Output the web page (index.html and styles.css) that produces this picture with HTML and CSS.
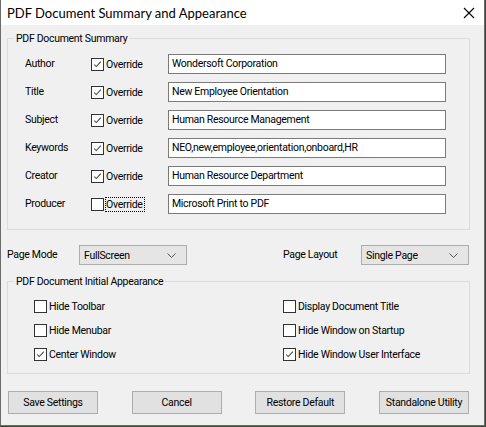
FILE: index.html
```html
<!DOCTYPE html>
<html>
<head>
<meta charset="utf-8">
<link rel="stylesheet" href="styles.css">
</head>
<body>
<div class="window">
  <div class="titlebar">
    <span class="title">PDF Document Summary and Appearance</span>
    <svg class="close" width="12" height="12" viewBox="0 0 12 12"><path d="M1 1L11 11M11 1L1 11" stroke="#000" stroke-width="1.1" fill="none"/></svg>
  </div>
  <div class="content">
    <fieldset class="group summary">
      <legend>PDF Document Summary</legend>
      <div class="rows">
        <div class="row"><span class="lbl">Author</span><span class="cb checked"><svg viewBox="0 0 13 13"><path d="M2.5 6.5L5 9L10.5 3" /></svg></span><span class="cbtext">Override</span><div class="input">Wondersoft Corporation</div></div>
        <div class="row"><span class="lbl">Title</span><span class="cb checked"><svg viewBox="0 0 13 13"><path d="M2.5 6.5L5 9L10.5 3" /></svg></span><span class="cbtext">Override</span><div class="input">New Employee Orientation</div></div>
        <div class="row"><span class="lbl">Subject</span><span class="cb checked"><svg viewBox="0 0 13 13"><path d="M2.5 6.5L5 9L10.5 3" /></svg></span><span class="cbtext">Override</span><div class="input">Human Resource Management</div></div>
        <div class="row"><span class="lbl">Keywords</span><span class="cb checked"><svg viewBox="0 0 13 13"><path d="M2.5 6.5L5 9L10.5 3" /></svg></span><span class="cbtext">Override</span><div class="input">NEO,new,employee,orientation,onboard,HR</div></div>
        <div class="row"><span class="lbl">Creator</span><span class="cb checked"><svg viewBox="0 0 13 13"><path d="M2.5 6.5L5 9L10.5 3" /></svg></span><span class="cbtext">Override</span><div class="input">Human Resource Department</div></div>
        <div class="row"><span class="lbl">Producer</span><span class="cb"></span><span class="cbtext"><span class="focus">Override</span></span><div class="input">Microsoft Print to PDF</div></div>
      </div>
    </fieldset>
    <div class="moderow">
      <span class="modelbl">Page Mode</span>
      <div class="select">FullScreen<svg class="chev" width="9" height="5" viewBox="0 0 9 5"><path d="M0.5 0.5L4.5 4.5L8.5 0.5"/></svg></div>
      <span class="modelbl layoutlbl">Page Layout</span>
      <div class="select">Single Page<svg class="chev" width="9" height="5" viewBox="0 0 9 5"><path d="M0.5 0.5L4.5 4.5L8.5 0.5"/></svg></div>
    </div>
    <fieldset class="group appearance">
      <legend>PDF Document Initial Appearance</legend>
      <div class="opts">
        <div class="col">
          <div class="opt"><span class="cb"></span><span class="cbtext">Hide Toolbar</span></div>
          <div class="opt"><span class="cb"></span><span class="cbtext">Hide Menubar</span></div>
          <div class="opt"><span class="cb checked"><svg viewBox="0 0 13 13"><path d="M2.5 6.5L5 9L10.5 3" /></svg></span><span class="cbtext">Center Window</span></div>
        </div>
        <div class="col right">
          <div class="opt"><span class="cb"></span><span class="cbtext">Display Document Title</span></div>
          <div class="opt"><span class="cb"></span><span class="cbtext">Hide Window on Startup</span></div>
          <div class="opt"><span class="cb checked"><svg viewBox="0 0 13 13"><path d="M2.5 6.5L5 9L10.5 3" /></svg></span><span class="cbtext">Hide Window User Interface</span></div>
        </div>
      </div>
    </fieldset>
    <div class="buttons">
      <div class="btn">Save Settings</div>
      <div class="btn">Cancel</div>
      <div class="btn">Restore Default</div>
      <div class="btn">Standalone Utility</div>
    </div>
  </div>
</div>
</body>
</html>
```
FILE: styles.css
```css
* { box-sizing: border-box; }
html, body { margin: 0; padding: 0; }
body {
  background: #3b4834;
  width: 486px;
  height: 427px;
  overflow: hidden;
  font-family: Roboto, "Liberation Sans", Arial, sans-serif;
  font-size: 10.5px;
  letter-spacing: -0.3px;
  color: #000;
}
.window {
  width: 485px;
  height: 426px;
  background: #f0f0f0;
  border: 1px solid #6b6b6b;
  border-top: none;
  display: flex;
  flex-direction: column;
}
.titlebar {
  height: 25px;
  background: #fff;
  display: flex;
  align-items: center;
  justify-content: space-between;
  padding: 0 9px 0 6px;
}
.title {
  font-family: Lato, "Noto Sans", sans-serif;
  font-size: 13px;
  letter-spacing: 0;
  color: #000;
}
.close { display: block; }
.content {
  padding: 7px 14px 0 6px;
  display: flex;
  flex-direction: column;
}
.group {
  margin: 0;
  padding: 0;
  border: 1px solid #dcdcdc;
  min-width: 0;
}
.group legend {
  margin-left: 6px;
  padding: 0 2px;
  line-height: 13px;
}
.rows {
  padding: 9px 23px 15px 17px;
  display: flex;
  flex-direction: column;
  gap: 8px;
}
.row {
  display: flex;
  align-items: center;
  height: 20px;
}
.lbl { width: 66px; position: relative; top: -1px; }
.cb {
  width: 13px;
  height: 13px;
  border: 1px solid #333;
  background: #fff;
  flex: none;
  display: block;
}
.cb svg { display: block; width: 11px; height: 11px; margin: 0; }
.cb svg path { fill: none; stroke: #444; stroke-width: 1.2; }
.cbtext { margin-left: 2px; line-height: 13px; }
.focus { outline: 1px dotted #000; outline-offset: 0; padding-right: 1px; }
.row .cbtext { width: 62px; flex: none; }
.input {
  width: 278px;
  height: 20px;
  border: 1px solid #7a7a7a;
  background: #fff;
  padding: 0 3px;
  line-height: 18px;
  white-space: nowrap;
  overflow: hidden;
}
.moderow {
  display: flex;
  align-items: center;
  margin-top: 15px;
  height: 20px;
}
.modelbl { width: 72px; position: relative; top: -1px; }
.layoutlbl { margin-left: 96px; width: 78px; }
.select {
  width: 108px;
  height: 20px;
  border: 1px solid #adadad;
  background: #e5e5e5;
  padding: 0 10px 0 4px;
  display: flex;
  align-items: center;
  justify-content: space-between;
}
.chev path { fill: none; stroke: #555; stroke-width: 1; }
.appearance { margin-top: 10px; }
.opts {
  display: flex;
  padding: 12px 0 12px 26px;
}
.col {
  display: flex;
  flex-direction: column;
  gap: 11px;
  width: 249px;
  flex: none;
}
.col.right { width: 180px; }
.opt { display: flex; align-items: center; height: 13px; }
.buttons {
  display: flex;
  justify-content: space-between;
  margin-top: 17px;
  padding: 0 1px 0 1px;
}
.btn {
  width: 90px;
  height: 23px;
  border: 1px solid #adadad;
  background: #e1e1e1;
  display: flex;
  align-items: center;
  justify-content: center;
}
```
